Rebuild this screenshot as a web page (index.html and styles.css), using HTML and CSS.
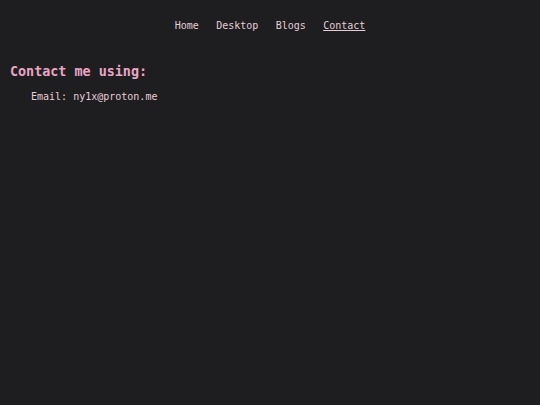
FILE: index.html
```html
<!DOCTYPE html>
<html>
<head>
<meta charset="utf-8">
<link rel="stylesheet" href="styles.css">
</head>
<body>
<nav class="nav">
  <a href="#">Home</a>
  <a href="#">Desktop</a>
  <a href="#">Blogs</a>
  <a href="#" class="active">Contact</a>
</nav>
<main class="main">
  <h1 class="title">Contact me using:</h1>
  <p class="item">Email: ny1x@proton.me</p>
</main>
</body>
</html>
```
FILE: styles.css
```css
html, body {
  margin: 0;
  padding: 0;
  background: #1e1e20;
  height: 100%;
}
body {
  font-family: "DejaVu Sans Mono", monospace;
  font-size: 10px;
  color: #e6cdd6;
}
.nav {
  display: flex;
  justify-content: center;
  gap: 17.4px;
  padding-top: 20px;
  line-height: 12px;
}
.nav a {
  color: #e6cdd6;
  text-decoration: none;
}
.nav a.active {
  text-decoration: underline;
}
.main {
  padding: 0 10px;
}
.title {
  margin: 32px 0 0 0;
  font-size: 13.4px;
  font-weight: bold;
  color: #e8a6c4;
  line-height: 16px;
}
.item {
  margin: 11px 0 0 21px;
  line-height: 12px;
}
```
